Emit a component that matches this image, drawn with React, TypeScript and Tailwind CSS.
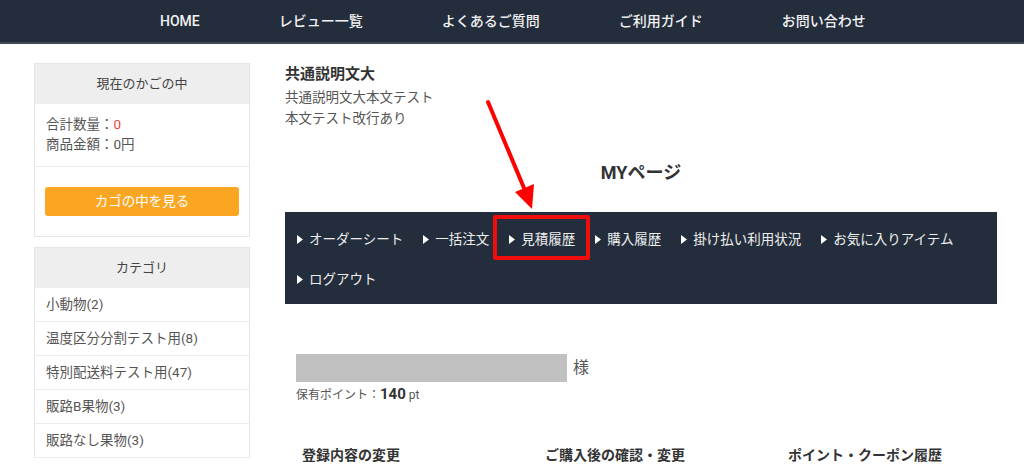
import React from 'react';

const topNav = ['HOME', 'レビュー一覧', 'よくあるご質問', 'ご利用ガイド', 'お問い合わせ'];

const categories = ['小動物(2)', '温度区分分割テスト用(8)', '特別配送料テスト用(47)', '販路B果物(3)', '販路なし果物(3)'];

const myMenu = [
  { label: 'オーダーシート' },
  { label: '一括注文' },
  { label: '見積履歴', marked: true },
  { label: '購入履歴' },
  { label: '掛け払い利用状況' },
  { label: 'お気に入りアイテム' },
  { label: 'ログアウト' },
];

const Triangle = () => (
  <svg width="6" height="9" viewBox="0 0 6 9" className="mr-[6px] shrink-0">
    <polygon points="0,0 6,4.5 0,9" fill="#ffffff" />
  </svg>
);

export default function App() {
  return (
    <div
      className="relative w-[1024px] h-[466px] overflow-hidden bg-white text-[#555]"
      style={{ fontFamily: "Roboto, 'Noto Sans CJK JP', sans-serif" }}
    >
      {/* header */}
      <header className="h-[44px] bg-[#232d3c] border-b-2 border-[#3f4857] flex items-center pl-[160px] gap-[79px]">
        {topNav.map((item) => (
          <span key={item} className="text-[14px] font-medium text-[#f2f2f2]">
            {item}
          </span>
        ))}
      </header>

      <div className="flex pl-[34px] pt-[19px] gap-[35px]">
        {/* sidebar */}
        <aside className="w-[216px] shrink-0 flex flex-col gap-[10px]">
          <div className="border border-[#e6e6e6]">
            <div className="h-[40px] bg-[#eeeeee] flex items-center justify-center text-[13px] text-[#444]">
              現在のかごの中
            </div>
            <div className="px-[11px] pt-[10px] pb-[12px] text-[13.5px] leading-[20px] border-b border-[#ececec]">
              <div>
                合計数量：<span className="text-[#f0413f]">0</span>
              </div>
              <div>商品金額：0円</div>
            </div>
            <div className="px-[10px] pt-[20px] pb-[20px]">
              <div className="h-[29px] rounded-[3px] bg-[#fba623] flex items-center justify-center text-[13.5px] text-white">
                カゴの中を見る
              </div>
            </div>
          </div>

          <div className="border border-[#e6e6e6] border-b-0">
            <div className="h-[40px] bg-[#eeeeee] flex items-center justify-center text-[13px] text-[#444]">
              カテゴリ
            </div>
            {categories.map((c) => (
              <div key={c} className="h-[34px] flex items-center pl-[11px] border-b border-[#ececec] text-[13.5px]">
                {c}
              </div>
            ))}
          </div>
        </aside>

        {/* main */}
        <main className="w-[712px] shrink-0">
          <div className="text-[15px] font-bold leading-[22px] text-[#333]">共通説明文大</div>
          <div className="mt-[2px] text-[13.5px] leading-[21px] text-[#555]">
            <div>共通説明文大本文テスト</div>
            <div>本文テスト改行あり</div>
          </div>

          <h1 className="mt-[32px] text-center text-[18px] font-bold leading-[24px] text-[#333]">MYページ</h1>

          <nav className="mt-[27px] bg-[#232d3c] pl-[12px] pt-[7px] pb-[5px] flex flex-wrap">
            {myMenu.map((m) => (
              <span key={m.label} className="relative h-[40px] mr-[20px] inline-flex items-center text-[13.5px] text-[#eeeeee]">
                <Triangle />
                {m.label}
                {m.marked && (
                  <span className="absolute left-[-16px] right-[-15px] top-[-4px] bottom-[-1px] border-[4px] border-[#f20d0d] rounded-[2px]" />
                )}
              </span>
            ))}
          </nav>

          <div className="mt-[50px] pl-[11px]">
            <div className="flex items-center">
              <div className="w-[271px] h-[28px] bg-[#c1c1c1]" />
              <span className="ml-[6px] text-[16px] text-[#555]">様</span>
            </div>
            <div className="mt-[2px] leading-[20px] text-[12px] text-[#555]">
              保有ポイント：<span className="text-[15px] font-bold text-[#333]">140</span> pt
            </div>
          </div>

          <div className="mt-[40px] pl-[17px] flex text-[14px] font-bold text-[#333] leading-[20px]">
            <span className="w-[243px]">登録内容の変更</span>
            <span className="w-[243px]">ご購入後の確認・変更</span>
            <span className="w-[200px]">ポイント・クーポン履歴</span>
          </div>
        </main>
      </div>

      {/* annotation arrow */}
      <svg className="absolute left-0 top-0 pointer-events-none" width="1024" height="466">
        <line x1="488" y1="102" x2="524" y2="188" stroke="#ff0000" strokeWidth="4" strokeLinecap="round" />
        <polygon points="515,192 534,184 532,209" fill="#ff0000" />
      </svg>
    </div>
  );
}
